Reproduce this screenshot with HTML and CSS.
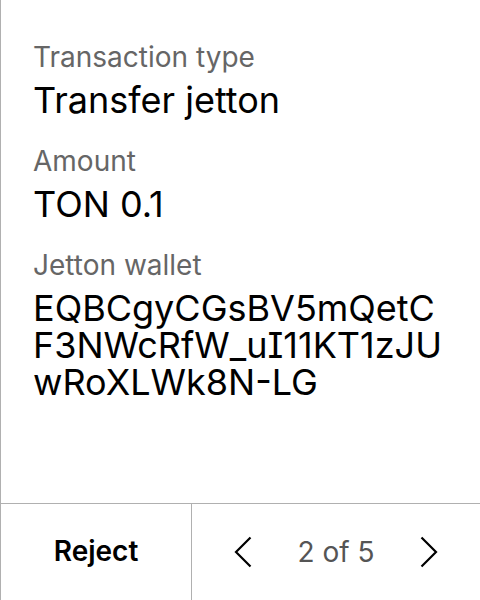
FILE: index.html
```html
<!DOCTYPE html>
<html>
<head>
<meta charset="utf-8">
<link rel="stylesheet" href="styles.css">
</head>
<body>
<div class="screen">
  <main class="details">
    <section class="field">
      <div class="label">Transaction type</div>
      <div class="value">Transfer jetton</div>
    </section>
    <section class="field">
      <div class="label">Amount</div>
      <div class="value">TON 0.1</div>
    </section>
    <section class="field">
      <div class="label">Jetton wallet</div>
      <div class="value address">EQBCgyCGsBV5mQetCF3NWcRfW_uI11KT1zJUwRoXLWk8N-LG</div>
    </section>
  </main>
  <footer class="footer">
    <div class="reject">Reject</div>
    <div class="pager">
      <svg class="chev" width="18" height="32" viewBox="0 0 18 32"><path d="M16.5 1.5 L2 16 L16.5 30.5" fill="none" stroke="#000" stroke-width="2.2"/></svg>
      <span class="count">2 of 5</span>
      <svg class="chev" width="18" height="32" viewBox="0 0 18 32"><path d="M1.5 1.5 L16 16 L1.5 30.5" fill="none" stroke="#000" stroke-width="2.2"/></svg>
    </div>
  </footer>
</div>
</body>
</html>
```
FILE: styles.css
```css
html, body {
  margin: 0;
  padding: 0;
  background: #fff;
}
body {
  font-family: Inter, "Noto Sans", sans-serif;
  font-feature-settings: "cv08";
  color: #000;
}
.screen {
  width: 480px;
  height: 600px;
  box-sizing: border-box;
  border-left: 1px solid #b0b0b0;
  display: flex;
  flex-direction: column;
}
.details {
  flex: 1;
  padding: 40px 32px 0 32px;
  display: flex;
  flex-direction: column;
  gap: 25px;
}
.field {
  display: flex;
  flex-direction: column;
  gap: 8px;
}
.label {
  font-size: 28px;
  line-height: 34px;
  color: #666;
}
.value {
  font-size: 36px;
  line-height: 37px;
  color: #000;
}
.address {
  word-break: break-all;
}
.footer {
  height: 96px;
  border-top: 1px solid #b0b0b0;
  display: grid;
  grid-template-columns: 191px 1fr;
}
.reject {
  border-right: 1px solid #b0b0b0;
  display: flex;
  align-items: center;
  justify-content: center;
  font-size: 28px;
  font-weight: 600;
  padding-bottom: 2px;
}
.pager {
  display: flex;
  align-items: center;
  justify-content: space-between;
  padding: 0 42px;
}
.count {
  font-size: 28px;
  color: #555;
}
.chev {
  display: block;
}
```
